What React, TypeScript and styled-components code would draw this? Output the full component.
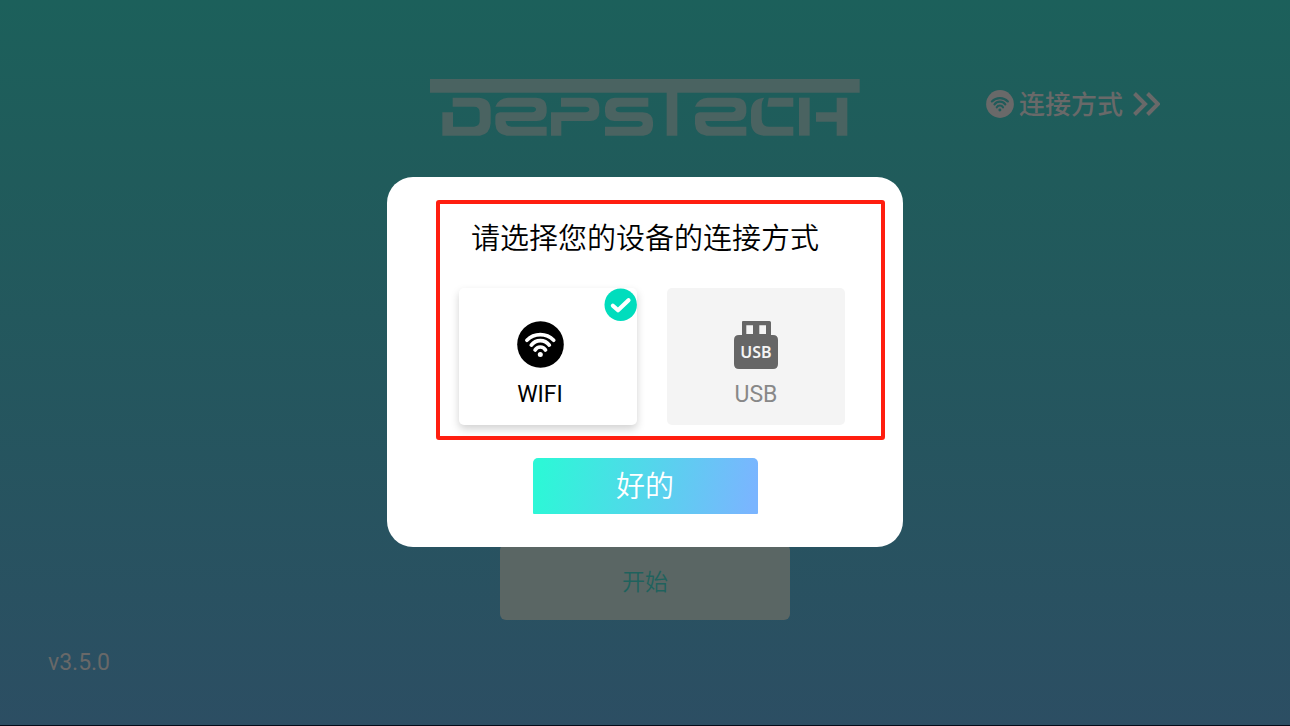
import React, { useState } from 'react';
import styled, { createGlobalStyle } from 'styled-components';

const GlobalStyle = createGlobalStyle`
  *, *::before, *::after { box-sizing: border-box; }
  body {
    margin: 0;
    font-family: Roboto, "Noto Sans CJK SC", sans-serif;
  }
`;

const Page = styled.div`
  min-height: 100vh;
  display: flex;
  flex-direction: column;
  background: linear-gradient(#1c605b 0%, #205b5b 25%, #2c4e63 100%);
  border-bottom: 1px solid #050a18;
`;

const Header = styled.header`
  display: grid;
  grid-template-columns: 1fr auto 1fr;
  align-items: start;
  padding-top: 79px;
`;

const LogoArt = styled.svg`
  grid-column: 2;
  display: block;
  width: 430px;
  height: 57px;
  fill: #4a6361;
`;

const MethodLink = styled.a`
  justify-self: end;
  display: flex;
  align-items: center;
  gap: 5px;
  margin: 6px 130px 0 0;
  color: #696969;
  font-size: 26px;
  font-weight: 500;
  line-height: 36px;
  text-decoration: none;
  white-space: nowrap;
`;

const LinkText = styled.span`
  padding-top: 2px;
`;

const Chevrons = styled.svg`
  display: block;
  width: 27px;
  height: 24px;
  margin-left: 5px;
  fill: none;
  stroke: currentColor;
  stroke-width: 4;
`;

const Main = styled.main`
  flex: 1;
  display: flex;
  align-items: flex-end;
  justify-content: center;
`;

const StartButton = styled.button`
  width: 290px;
  height: 76px;
  padding: 0 0 4px;
  border: 0;
  border-radius: 6px;
  background: #5a6664;
  color: #1f625d;
  font: inherit;
  font-size: 23px;
  font-weight: 350;
`;

const Footer = styled.footer`
  padding: 31px 48px 50px;
  color: #686868;
  font-size: 23px;
  line-height: 24px;
`;

const Overlay = styled.div`
  position: fixed;
  inset: 0;
  display: flex;
  align-items: center;
  justify-content: center;
  padding-bottom: 2px;
`;

const Dialog = styled.form`
  display: flex;
  flex-direction: column;
  align-items: center;
  gap: 18px;
  width: 100%;
  max-width: 516px;
  padding: 23px 18px 33px 49px;
  border-radius: 26px;
  background: #fff;
`;

const Choices = styled.section`
  width: 100%;
  padding: 15px 36px 11px 19px;
  border: 4px solid #ff1e10;
  border-radius: 3px;
`;

const Title = styled.h1`
  margin: 0 0 29px 12px;
  color: #000;
  font-size: 29px;
  font-weight: 350;
  line-height: 40px;
  white-space: nowrap;
`;

const Cards = styled.div`
  display: grid;
  grid-template-columns: 1fr 1fr;
  gap: 30px;
`;

const Card = styled.label<{ $selected: boolean }>`
  position: relative;
  display: flex;
  flex-direction: column;
  align-items: center;
  gap: 9px;
  height: 137px;
  padding-top: 33px;
  border-radius: 5px;
  background: ${(p) => (p.$selected ? '#fff' : '#f4f4f4')};
  color: ${(p) => (p.$selected ? '#000' : '#888')};
  box-shadow: ${(p) => (p.$selected ? '0 4px 9px rgba(0, 0, 0, 0.18)' : 'none')};
  font-size: 23px;
  line-height: 32px;
  cursor: pointer;
`;

const WifiCard = styled(Card)`
  padding-right: 16px;
`;

const Radio = styled.input`
  position: absolute;
  inset: 0;
  margin: 0;
  opacity: 0;
`;

const IconSlot = styled.span`
  display: flex;
  align-items: flex-start;
  height: 49px;
`;

const Badge = styled.svg`
  position: absolute;
  top: 0;
  right: 0;
  width: 33px;
  height: 33px;
`;

const ConfirmButton = styled.button`
  width: 225px;
  height: 56px;
  margin-right: 31px;
  padding: 0 0 4px;
  border: 0;
  border-radius: 5px 5px 1px 1px;
  background: linear-gradient(100deg, #2df7d7 4%, #7ab5ff 97%);
  color: #fff;
  font: inherit;
  font-size: 29px;
  font-weight: 350;
`;

function Logo() {
  const e =
    'M226 110 Q236 84 264 83 H348 Q380 85 380 112 V127 Q378 153 350 153 H257 Q258 170 274 170 H380 V197 H260 Q228 193 226 162 V140 Q228 128 240 127 H336 Q348 126 348 118 Q348 110 336 110 Z';
  return (
    <LogoArt viewBox="30 27 1290 171" preserveAspectRatio="none" role="img" aria-label="DEPSTECH">
      <path d="M30 27 H1319 V68 H772 V197 H740 V68 H30 Z" />
      <path d="M98 83 H178 Q212 86 212 120 V160 Q209 194 180 197 H67 V127 H99 V170 H162 Q179 169 179 154 V127 Q179 110 162 110 H98 Z" />
      <path d={e} />
      <path d="M423 83 H510 Q538 85 538 112 V127 Q536 153 510 153 H424 V197 H393 V127 H496 Q508 126 508 118 Q508 110 496 110 H423 Z" />
      <path d="M585 83 H685 V110 H600 Q587 111 587 118 Q587 127 600 127 H668 Q699 129 699 156 V168 Q697 195 670 197 H555 V170 H655 Q668 169 668 161 Q668 153 655 153 H583 Q555 151 555 125 V112 Q557 85 585 83 Z" />
      <path d={e} transform="translate(599 0)" />
      <path d="M1033 83 Q1025 92 1025 110 V148 Q1026 170 1048 170 H1120 V197 H1032 Q995 194 993 158 V122 Q995 86 1033 83 Z" />
      <path d="M1046 83 H1120 V110 H1042 Z" />
      <path d="M1137 83 H1169 V197 H1137 Z" />
      <path d="M1250 83 H1282 V197 H1250 V155 H1188 V127 H1250 Z" />
    </LogoArt>
  );
}

function WifiIcon({ size, color, mark }: { size: number; color: string; mark: string }) {
  return (
    <svg width={size} height={size} viewBox="0 0 47 47" aria-hidden="true">
      <circle cx="23.5" cy="23.5" r="23.3" fill={color} />
      <g fill="none" stroke={mark} strokeWidth="3.7" strokeLinecap="round">
        <path d="M9.9 19.2 A18.8 18.8 0 0 1 36.7 19.2" />
        <path d="M14.3 24.1 A11.2 11.2 0 0 1 32.3 24.1" />
        <path d="M18.1 29 A6 6 0 0 1 28.5 29" />
      </g>
      <circle cx="23.3" cy="33.4" r="2.5" fill={mark} />
    </svg>
  );
}

function UsbIcon() {
  return (
    <svg width="44" height="49" viewBox="0 0 44 49" aria-hidden="true">
      <path
        fill="#666"
        fillRule="evenodd"
        d="M9 0 H35.5 Q37 0 37 1.5 V14 H39 Q44 14 44 19 V43 Q44 48 39 48 H5 Q0 48 0 43 V19 Q0 14 5 14 H8 V1 Q8 0 9 0 Z M12.3 4.2 V13 H19 V4.2 Z M25.3 4.2 V13 H32 V4.2 Z"
      />
      <text
        x="22"
        y="37"
        textAnchor="middle"
        fill="#f4f4f4"
        fontFamily='"Noto Sans", sans-serif'
        fontSize="16"
        fontWeight="600"
      >
        USB
      </text>
    </svg>
  );
}

export default function App() {
  const [method, setMethod] = useState('wifi');

  const badge = (
    <Badge viewBox="0 0 33 33" aria-hidden="true">
      <circle cx="16.7" cy="16.7" r="16.2" fill="#00ddbd" />
      <path
        d="M8.9 17.7 L14 22.3 L24.5 12.2"
        fill="none"
        stroke="#fff"
        strokeWidth="4.2"
        strokeLinecap="round"
        strokeLinejoin="round"
      />
    </Badge>
  );

  return (
    <>
      <GlobalStyle />
      <Page>
        <Header>
          <Logo />
          <MethodLink href="#connection">
            <WifiIcon size={28} color="#696969" mark="#205b5a" />
            <LinkText>连接方式</LinkText>
            <Chevrons viewBox="0 0 27 24" aria-hidden="true">
              <path d="M1.5 1.5 L12 12 L1.5 22.5 M14.5 1.5 L25 12 L14.5 22.5" />
            </Chevrons>
          </MethodLink>
        </Header>
        <Main>
          <StartButton type="button">开始</StartButton>
        </Main>
        <Footer>v3.5.0</Footer>
      </Page>

      <Overlay>
        <Dialog
          role="dialog"
          aria-modal="true"
          aria-labelledby="connection-title"
          onSubmit={(event) => event.preventDefault()}
        >
          <Choices role="radiogroup" aria-labelledby="connection-title">
            <Title id="connection-title">请选择您的设备的连接方式</Title>
            <Cards>
              <WifiCard $selected={method === 'wifi'}>
                <Radio
                  type="radio"
                  name="method"
                  checked={method === 'wifi'}
                  onChange={() => setMethod('wifi')}
                />
                <IconSlot>
                  <WifiIcon size={47} color="#000" mark="#fff" />
                </IconSlot>
                WIFI
                {method === 'wifi' && badge}
              </WifiCard>
              <Card $selected={method === 'usb'}>
                <Radio
                  type="radio"
                  name="method"
                  checked={method === 'usb'}
                  onChange={() => setMethod('usb')}
                />
                <IconSlot>
                  <UsbIcon />
                </IconSlot>
                USB
                {method === 'usb' && badge}
              </Card>
            </Cards>
          </Choices>
          <ConfirmButton type="submit">好的</ConfirmButton>
        </Dialog>
      </Overlay>
    </>
  );
}
